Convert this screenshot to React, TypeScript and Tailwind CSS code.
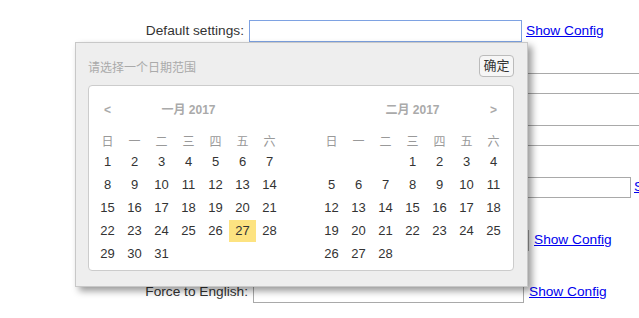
import React from 'react';

const WEEK = ['日', '一', '二', '三', '四', '五', '六'];

const jan: (number | null)[][] = [
    [1, 2, 3, 4, 5, 6, 7],
    [8, 9, 10, 11, 12, 13, 14],
    [15, 16, 17, 18, 19, 20, 21],
    [22, 23, 24, 25, 26, 27, 28],
    [29, 30, 31, null, null, null, null],
];

const feb: (number | null)[][] = [
    [null, null, null, 1, 2, 3, 4],
    [5, 6, 7, 8, 9, 10, 11],
    [12, 13, 14, 15, 16, 17, 18],
    [19, 20, 21, 22, 23, 24, 25],
    [26, 27, 28, null, null, null, null],
];

const cjk = "font-['Liberation_Sans','Noto_Sans_CJK_SC',sans-serif]";

interface MonthProps {
    title: string;
    weeks: (number | null)[][];
    prev?: boolean;
    next?: boolean;
    selected?: number;
}

const Month: React.FC<MonthProps> = ({ title, weeks, prev, next, selected }) => (
    <div className="w-[189px]">
        <div className="flex h-[26px] items-center text-[12px] font-bold text-[#aaa]">
            <div className="w-[27px] text-center">{prev ? '<' : ''}</div>
            <div className="w-[135px] text-center">{title}</div>
            <div className="w-[27px] text-center">{next ? '>' : ''}</div>
        </div>
        <div className="mt-[11px] flex h-[16px] items-center text-[12px] leading-[16px] text-[#999]">
            {WEEK.map((d) => (
                <div key={d} className="w-[27px] text-center">{d}</div>
            ))}
        </div>
        {weeks.map((row, i) => (
            <div key={i} className="flex h-[23px]">
                {row.map((n, j) => (
                    <div
                        key={j}
                        className={`flex w-[27px] items-center justify-center text-[13px] leading-[16px] text-[#333] ${n !== null && n === selected ? 'mt-[1px] h-[22px] bg-[#fde381]' : 'h-[23px]'}`}
                    >
                        {n ?? ''}
                    </div>
                ))}
            </div>
        ))}
    </div>
);

const Input: React.FC<{ w: string; focused?: boolean; tall?: boolean }> = ({ w, focused, tall }) => (
    <div className={`${w} ${tall ? 'h-[22px]' : 'h-[21px]'} shrink-0 border bg-white ${focused ? 'border-[#7ea2e2]' : 'border-[#a9a9a9]'}`} />
);

const Link: React.FC<{ ml: string }> = ({ ml }) => (
    <a href="#" className={`${ml} shrink-0 whitespace-nowrap text-[13.7px] text-[#0000ee] underline`}>Show Config</a>
);

export default function App() {
    return (
        <div className="relative h-[318px] w-[639px] overflow-hidden bg-white font-['Liberation_Sans',sans-serif] text-[#333]">
            <div className="flex flex-col pt-[20px] text-[13.7px]">
                <div className="flex h-[22px] items-center">
                    <span className="w-[244px] shrink-0 text-right">Default settings:</span>
                    <div className="ml-[5px]"><Input w="w-[273px]" focused tall /></div>
                    <Link ml="ml-[4px]" />
                </div>
                <div className="mt-[31px] flex h-[21px] items-center">
                    <span className="w-[250px] shrink-0 text-right">Custom range:</span>
                    <div className="ml-[5px]"><Input w="w-[420px]" /></div>
                </div>
                <div className="mt-[31px] flex h-[21px] items-center">
                    <span className="w-[250px] shrink-0 text-right">Single date:</span>
                    <div className="ml-[5px]"><Input w="w-[420px]" /></div>
                </div>
                <div className="mt-[31px] flex h-[21px] items-center">
                    <span className="w-[296px] shrink-0 text-right">Time picker:</span>
                    <div className="ml-[5px]"><Input w="w-[330px]" /></div>
                    <Link ml="ml-[3px]" />
                </div>
                <div className="mt-[32px] flex h-[21px] items-center">
                    <span className="w-[250px] shrink-0 text-right">Auto apply:</span>
                    <div className="ml-[5px]"><Input w="w-[274px]" /></div>
                    <Link ml="ml-[5px]" />
                </div>
                <div className="mt-[31px] flex h-[21px] items-center">
                    <span className="w-[248px] shrink-0 text-right">Force to English:</span>
                    <div className="ml-[5px]"><Input w="w-[271px]" /></div>
                    <Link ml="ml-[5px]" />
                </div>
            </div>

            <div className={`absolute left-[75px] top-[42px] h-[245px] w-[453px] border border-[#c8c8c8] bg-[#eeeeee] px-[12px] pt-[12px] shadow-[4px_4px_7px_rgba(0,0,0,0.4)] ${cjk}`}>
                <div className="flex h-[22px] items-start justify-between pr-[1px]">
                    <span className="pt-[4px] text-[12px] leading-[18px] text-[#aaa]">请选择一个日期范围</span>
                    <button className="h-[22px] w-[35px] rounded-[4px] border border-[#bbb] bg-[#f6f6f6] text-[13px] leading-[20px] text-[#333]">确定</button>
                </div>
                <div className="mt-[8px] flex h-[186px] w-[426px] rounded-[4px] border border-[#cccccc] bg-white pl-[5px] pt-[11px]">
                    <Month title="一月 2017" weeks={jan} prev selected={27} />
                    <div className="w-[35px] shrink-0" />
                    <Month title="二月 2017" weeks={feb} next />
                </div>
            </div>
        </div>
    );
}
